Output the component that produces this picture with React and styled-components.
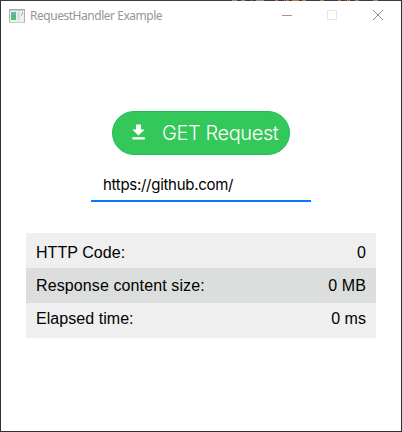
import React from "react";
import styled, { createGlobalStyle } from "styled-components";

const GlobalStyle = createGlobalStyle`
  * { box-sizing: border-box; }
  body { margin: 0; background: #fff; }
`;

const Window = styled.div`
  width: 402px;
  height: 432px;
  display: flex;
  flex-direction: column;
  background: #fff;
  border: 1px solid #303034;
  border-top: 0;
`;

const TopEdge = styled.div`
  height: 1px;
  flex: none;
  margin: 0 -1px;
  background: #3a3842;
  display: flex;
`;

const EdgeFleck = styled.i`
  height: 1px;
  width: ${(p) => p.$width}px;
  margin-left: ${(p) => p.$gap}px;
  background: ${(p) => p.$color};
`;

const TitleBar = styled.header`
  height: 29px;
  flex: none;
  display: flex;
  align-items: center;
  padding-left: 8px;
`;

const Title = styled.span`
  flex: 1;
  margin-left: 5px;
  padding-top: 1px;
  font: 12px/16px "Noto Sans", sans-serif;
  letter-spacing: -0.47px;
  color: #969696;
`;

const CaptionButtons = styled.div`
  display: flex;
  align-self: flex-start;
`;

const CaptionButton = styled.button`
  width: ${(p) => p.$width || 46}px;
  height: 28px;
  padding: 0;
  border: 0;
  background: none;
  display: grid;
  place-items: center;
`;

const Content = styled.main`
  display: flex;
  flex-direction: column;
  align-items: center;
  padding-top: 81px;
`;

const GetButton = styled.button`
  width: 178px;
  height: 44px;
  border: 1px solid #17c05c;
  border-radius: 22px;
  background: #34c759;
  color: #fff;
  padding: 0 0 0 19px;
  display: flex;
  align-items: center;
  gap: 16px;
  font: 300 20px/24px Inter, sans-serif;
  letter-spacing: -0.4px;
  white-space: nowrap;
`;

const UrlInput = styled.input`
  width: 220px;
  height: 32px;
  margin-top: 15px;
  padding: 0 12px 2px;
  border: 0;
  border-bottom: 2px solid #007aff;
  outline: 0;
  background: transparent;
  color: #000;
  font: 15px/28px Inter, sans-serif;
  letter-spacing: -0.29px;
`;

const Results = styled.dl`
  width: 350px;
  margin: 31px 0 0;
`;

const ResultRow = styled.div`
  height: 35px;
  display: flex;
  justify-content: space-between;
  padding: ${(p) => p.$top}px 10px 0;
  background: ${(p) => (p.$dark ? "#dcdedd" : "#efefef")};
  font: 16px/18px "Liberation Sans", Arial, sans-serif;
  letter-spacing: ${(p) => (p.$dark ? 0.11 : 0.05)}px;
  color: #000;
`;

const Label = styled.dt``;
const Value = styled.dd`
  margin: 0;
`;

const rows = [
  { label: "HTTP Code:", value: "0", top: 11 },
  { label: "Response content size:", value: "0 MB", top: 9, dark: true },
  { label: "Elapsed time:", value: "0 ms", top: 7 },
];

const flecks = [
  { gap: 232, width: 4, color: "#a58076" },
  { gap: 0, width: 1, color: "#4cc77a" },
  { gap: 4, width: 4, color: "#a58076" },
  { gap: 6, width: 1, color: "#a58076" },
  { gap: 4, width: 1, color: "#4cc77a" },
  { gap: 0, width: 7, color: "#a58076" },
  { gap: 11, width: 3, color: "#b87a45" },
  { gap: 6, width: 1, color: "#b87a45" },
  { gap: 1, width: 3, color: "#b87a45" },
  { gap: 3, width: 7, color: "#b87a45" },
  { gap: 3, width: 4, color: "#b87a45" },
  { gap: 14, width: 4, color: "#b87a45" },
  { gap: 14, width: 3, color: "#b87a45" },
  { gap: 4, width: 1, color: "#b87a45" },
  { gap: 1, width: 3, color: "#b87a45" },
  { gap: 5, width: 4, color: "#b87a45" },
  { gap: 14, width: 5, color: "#b87a45" },
];

function AppIcon() {
  return (
    <svg width="16" height="14" viewBox="0 0 16 14" shapeRendering="crispEdges">
      <path fill="#a9b1ae" d="M0 0h16v14H0z" />
      <path fill="#edf1f0" d="M1 2h14v11H1z" />
      <path fill="#bfcac6" d="M1 1h14v1H1z" />
      <path fill="#78a9bd" d="M2 3h5v3H2z" />
      <path fill="#55bd7b" d="M2 6h5v5H2zM4 5h2v1H4z" />
      <path fill="#d9dede" d="M8 3h3v8H8z" />
      <path fill="#8fb7bd" d="M13 3h1v2h-1z" />
      <path fill="#a5c4a0" d="M12 5h1v2h-1z" />
      <path fill="#b7d8b1" d="M0 13h16v1H0z" />
    </svg>
  );
}

function DownloadIcon() {
  return (
    <svg width="14" height="18" viewBox="0 0 14 18" fill="currentColor">
      <path d="M4 0.5h5v5.1h3.7L6.5 11.6 0.3 5.6H4z" />
      <path d="M0.4 13.2h12.4v2.3H0.4z" />
    </svg>
  );
}

export default function App() {
  return (
    <>
      <GlobalStyle />
      <Window>
        <TopEdge>
          {flecks.map((f, i) => (
            <EdgeFleck key={i} $gap={f.gap} $width={f.width} $color={f.color} />
          ))}
        </TopEdge>
        <TitleBar>
          <AppIcon />
          <Title>RequestHandler Example</Title>
          <CaptionButtons>
            <CaptionButton aria-label="Minimize" $width={44}>
              <svg width="10" height="10"><path d="M0 5.5h10" stroke="#a89498" /></svg>
            </CaptionButton>
            <CaptionButton aria-label="Maximize" disabled>
              <svg width="10" height="10"><path d="M.5.5h9v9h-9z" fill="none" stroke="#e6e6e6" /></svg>
            </CaptionButton>
            <CaptionButton aria-label="Close">
              <svg width="10" height="10"><path d="M0 0l10 10M10 0L0 10" stroke="#8f8b90" /></svg>
            </CaptionButton>
          </CaptionButtons>
        </TitleBar>
        <Content>
          <GetButton>
            <DownloadIcon />
            GET Request
          </GetButton>
          <UrlInput defaultValue="https://github.com/" spellCheck={false} aria-label="URL" />
          <Results>
            {rows.map((r) => (
              <ResultRow key={r.label} $top={r.top} $dark={r.dark}>
                <Label>{r.label}</Label>
                <Value>{r.value}</Value>
              </ResultRow>
            ))}
          </Results>
        </Content>
      </Window>
    </>
  );
}
